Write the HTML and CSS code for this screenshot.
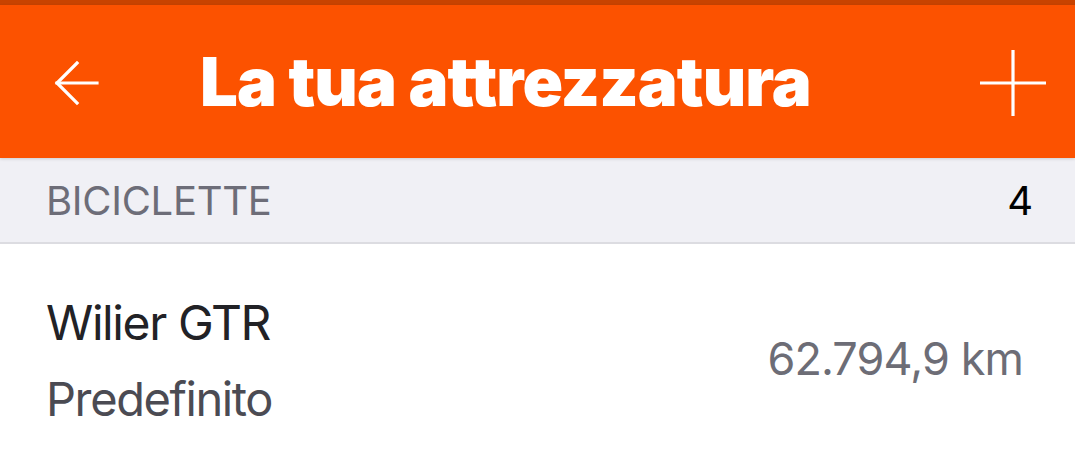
FILE: index.html
```html
<!DOCTYPE html>
<html lang="it">

<head>
    <meta charset="UTF-8">
    <meta name="viewport" content="width=device-width, initial-scale=1.0">
    <title>La tua attrezzatura</title>
    <link rel="stylesheet" href="styles.css">
</head>

<body>
    <div class="status-strip"></div>

    <header class="topbar">
        <button class="icon-btn back" aria-label="Indietro">
            <svg width="48" height="48" viewBox="0 0 48 48" fill="none" stroke="#fff" stroke-width="3.2" stroke-linecap="square">
                <path d="M45 24H5"/>
                <path d="M25 4L5 24L25 44"/>
            </svg>
        </button>
        <h1>La tua attrezzatura</h1>
        <button class="icon-btn add" aria-label="Aggiungi">
            <svg width="68" height="68" viewBox="0 0 68 68" fill="none" stroke="#fff" stroke-width="3.2">
                <path d="M34 1V67"/>
                <path d="M1 34H67"/>
            </svg>
        </button>
    </header>

    <div class="section-head">
        <span class="section-title">BICICLETTE</span>
        <span class="section-count">4</span>
    </div>

    <div class="gear-row">
        <div class="gear-info">
            <div class="gear-name">Wilier GTR</div>
            <div class="gear-tag">Predefinito</div>
        </div>
        <div class="gear-distance">62.794,9 km</div>
    </div>
</body>

</html>
```

FILE: styles.css
```css
body {
    margin: 0;
    font-family: Inter, 'Noto Sans', sans-serif;
    background-color: #fff;
    overflow: hidden;
}

.status-strip {
    height: 5px;
    background-color: #c84300;
}

.topbar {
    height: 153px;
    background-color: #fc5200;
    display: flex;
    align-items: center;
    padding: 0 28px 0 52px;
    position: relative;
    z-index: 1;
    box-shadow: 0 1px 3px rgba(0, 0, 0, 0.15);
}

.icon-btn {
    background: none;
    border: none;
    padding: 0;
    display: flex;
    cursor: pointer;
}

.back {
    margin-top: 2px;
}

.topbar h1 {
    flex: 1;
    margin: 0 0 0 100px;
    color: #fff;
    font-family: Inter, sans-serif;
    font-weight: 900;
    font-size: 67px;
    letter-spacing: -0.9px;
    line-height: 1;
}

.add {
    margin-top: 2px;
}

.section-head {
    background-color: #f0f0f5;
    border-bottom: 2px solid #dcdce1;
    display: flex;
    align-items: center;
    justify-content: space-between;
    padding: 0 42px 0 46px;
    box-sizing: border-box;
    height: 86px;
}

.section-title {
    color: #6d6d78;
    font-size: 40px;
    letter-spacing: -0.3px;
}

.section-count {
    color: #000;
    font-size: 40px;
}

.gear-row {
    display: flex;
    align-items: center;
    justify-content: space-between;
    padding: 55px 52px 0 46px;
}

.gear-name {
    color: #222226;
    font-size: 48px;
    letter-spacing: -1.4px;
    line-height: 1;
}

.gear-tag {
    color: #4b4b53;
    font-size: 47px;
    letter-spacing: -1.4px;
    line-height: 1;
    margin-top: 28px;
}

.gear-distance {
    color: #6d6d76;
    font-size: 45px;
    letter-spacing: -0.9px;
    margin-top: -4px;
}
```
